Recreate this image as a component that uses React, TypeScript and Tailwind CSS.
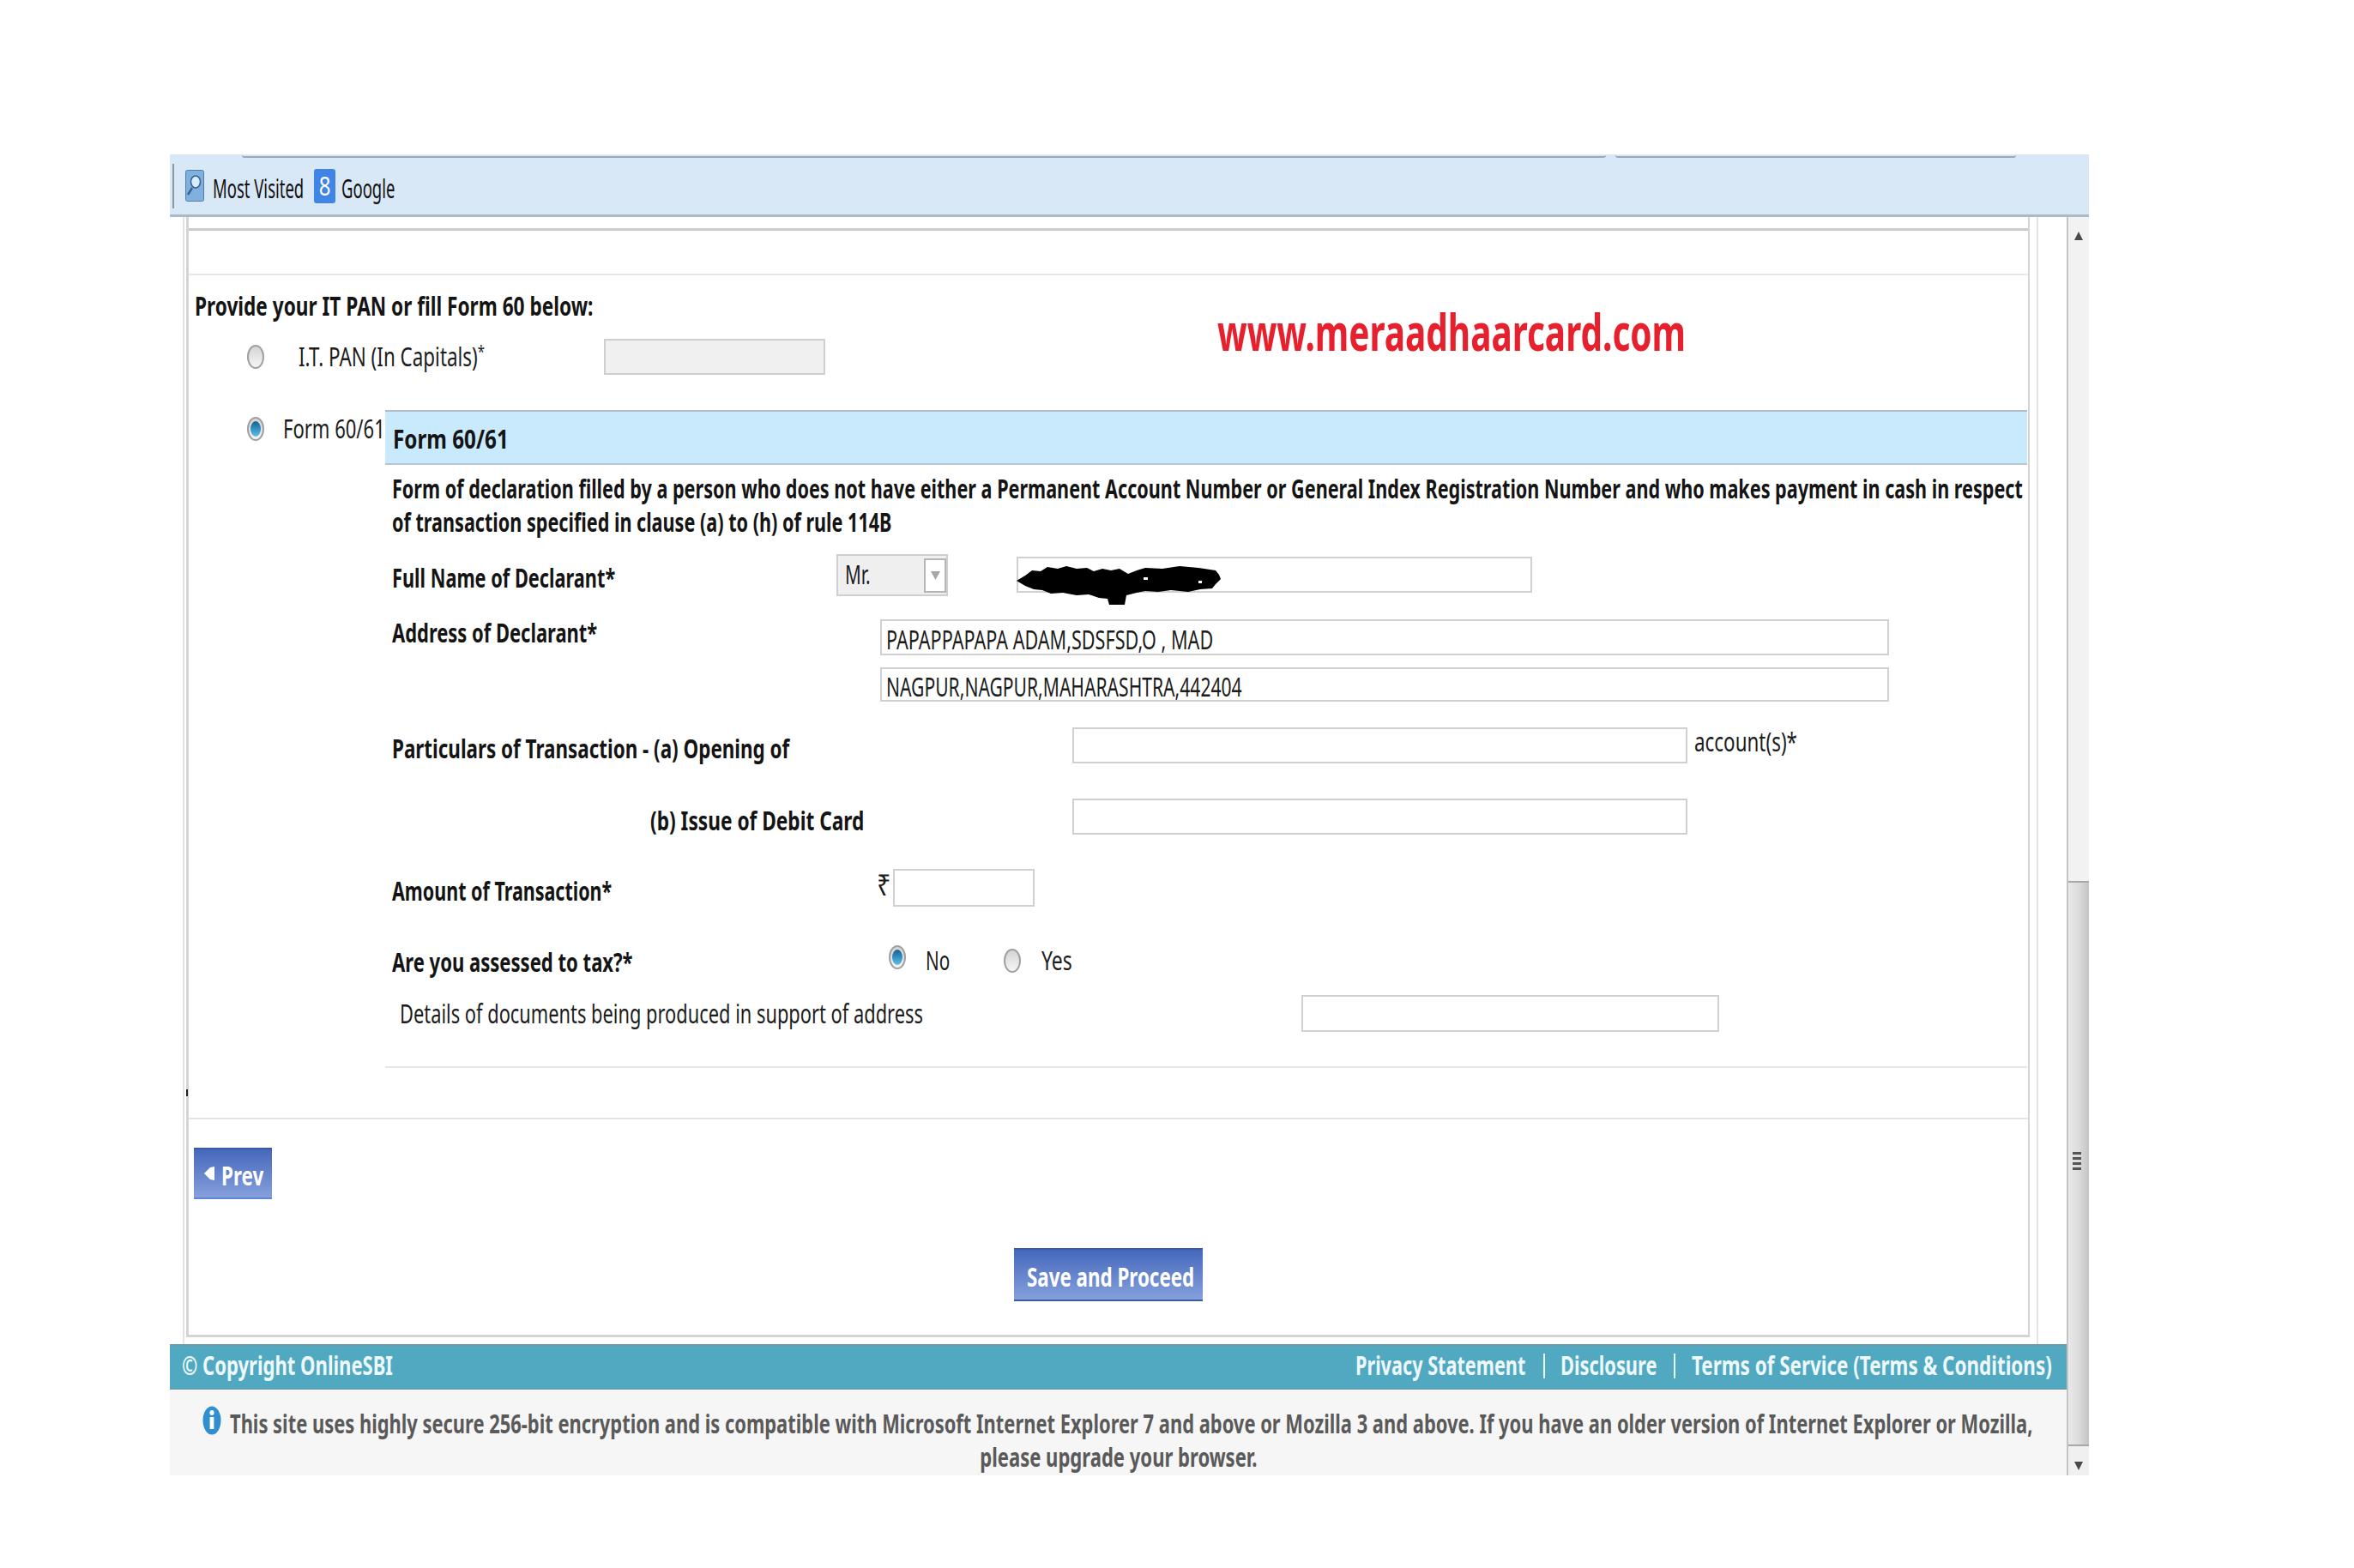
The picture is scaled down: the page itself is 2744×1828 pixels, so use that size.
import React from "react";
import clsx from "clsx";

const bold = "font-bold text-[30px] leading-[32px] text-[#141414]";
const reg = "text-[30px] leading-[32px] text-[#1c1c1c]";
const foot = "font-bold text-[30px] leading-[32px] text-[#eef8fb]";
const note = "font-bold text-[30px] text-[#5a5a5a]";
const btn = "font-bold text-[30px] leading-[32px] text-white";

function T({ c, o = "origin-left", children }: { c: string; o?: string; children: React.ReactNode }) {
  return <span className={clsx("inline-block whitespace-nowrap", o, c)}>{children}</span>;
}

function Radio({ on }: { on?: boolean }) {
  return (
    <div className="flex h-[28px] w-[20px] shrink-0 items-center justify-center rounded-[50%] border-2 border-[#a0a0a0] bg-gradient-to-b from-[#d4d4d4] to-[#f6f6f6]">
      {on && <div className="h-[18px] w-[12px] rounded-[50%] bg-gradient-to-b from-[#0f5f93] to-[#5ec1ee]" />}
    </div>
  );
}

function Box({ c, children }: { c: string; children?: React.ReactNode }) {
  return (
    <div className={clsx("flex shrink-0 items-center border-2 border-[#d0d0d0] bg-white pl-[5px]", c)}>{children}</div>
  );
}

function Arrow({ up }: { up?: boolean }) {
  return (
    <svg width="10" height="10" viewBox="0 0 10 10" className="block">
      <polygon points={up ? "5,0 10,10 0,10" : "0,0 10,0 5,10"} fill="#4a4a4a" />
    </svg>
  );
}

export default function App() {
  return (
    <div className="relative h-[1828px] w-[2744px] overflow-hidden bg-white pl-[198px] pt-[180px] font-['Noto_Sans',sans-serif]">
      <div className="flex h-[1540px] w-[2237px] flex-col">
        {/* Bookmarks toolbar */}
        <div className="h-[73px] shrink-0 border-b-[3px] border-[#a9bacb] bg-[#d9e8f7]">
          <div className="flex h-[4px] pl-[84px]">
            <div className="h-full w-[1590px] rounded-b-[3px] border-b-2 border-[#9aa7b5]" />
            <div className="ml-[11px] h-full w-[467px] rounded-b-[3px] border-b-2 border-[#9aa7b5]" />
          </div>
          <div className="flex h-[65px] items-center pl-[3px]">
            <div className="h-[52px] w-[2px] bg-[#8c98a6]" />
            <svg width="22" height="37" viewBox="0 0 22 37" className="ml-[13px] block shrink-0">
              <rect x="0.5" y="0.5" width="21" height="36" rx="2" fill="#7fb0de" stroke="#4b7fae" />
              <ellipse cx="12" cy="14" rx="5.5" ry="7" fill="#d8ecfb" stroke="#34658f" strokeWidth="1.6" />
              <line x1="8" y1="21" x2="3" y2="29" stroke="#34658f" strokeWidth="2.4" />
            </svg>
            <div className="ml-[10px] w-[118px] shrink-0 pt-[8px]">
              <T c="text-[30px] leading-[32px] text-[#111] scale-x-[0.616]">Most Visited</T>
            </div>
            <div className="flex h-[40px] w-[25px] shrink-0 items-center justify-center rounded-[3px] bg-[#3f84e6] text-[30px] leading-none text-white">
              <T o="origin-center" c="scale-x-[0.8]">8</T>
            </div>
            <div className="ml-[7px] pt-[8px]">
              <T c="text-[30px] leading-[32px] text-[#111] scale-x-[0.616]">Google</T>
            </div>
          </div>
        </div>

        <div className="flex min-h-0 flex-1">
          {/* Page */}
          <div className="flex w-[2211px] flex-col">
            <div className="h-[1314px] shrink-0 pl-[15px]">
              <div className="h-full w-[2163px] border-l-2 border-r-2 border-[#e3e3e3] pl-[2px]">
                <div className="flex h-[1306px] w-[2149px] flex-col border-b-[3px] border-l-[3px] border-r-2 border-[#d4d4d4] bg-white">
                  <div className="h-[16px] shrink-0 border-b-[3px] border-[#c9cccf]" />
                  <div className="h-[52px] shrink-0 border-b-2 border-[#e6e6e6]" />

                  <div className="flex h-[73px] shrink-0 items-center pb-[2px] pl-[7px]">
                    <T c={clsx(bold, "scale-x-[0.754]")}>Provide your IT PAN or fill Form 60 below:</T>
                  </div>

                  <div className="flex h-[44px] shrink-0 items-center pl-[68px]">
                    <Radio />
                    <div className="ml-[40px] w-[356px] shrink-0">
                      <T c={clsx(reg, "scale-x-[0.747]")}>
                        I.T. PAN (In Capitals)<sup className="text-[20px]">*</sup>
                      </T>
                    </div>
                    <div className="h-[42px] w-[258px] border-2 border-[#cfcfcf] bg-[#f0f0f0]" />
                  </div>

                  <div className="h-[40px] shrink-0" />

                  <div className="flex shrink-0">
                    <div className="flex h-[44px] w-[229px] shrink-0 items-center pl-[68px]">
                      <Radio on />
                      <div className="ml-[22px]">
                        <T c={clsx(reg, "scale-x-[0.734]")}>Form 60/61</T>
                      </div>
                    </div>
                    <div className="w-[1914px]">
                      <div className="flex h-[64px] items-center border-b-2 border-t-2 border-b-[#b9c6cf] border-t-[#aebdc8] bg-[#c9e9fd] pl-[9px] pt-[3px]">
                        <T c={clsx(bold, "scale-x-[0.808]")}>Form 60/61</T>
                      </div>
                      <div className="pl-[8px] pt-[12px]">
                        <div className="h-[39px] leading-[40px]">
                          <T c={clsx(bold, "scale-x-[0.72]")}>
                            Form of declaration filled by a person who does not have either a Permanent Account Number or
                            General Index Registration Number and who makes payment in cash in respect
                          </T>
                        </div>
                        <div className="h-[40px] leading-[40px]">
                          <T c={clsx(bold, "scale-x-[0.72]")}>of transaction specified in clause (a) to (h) of rule 114B</T>
                        </div>
                      </div>

                      <div className="mt-[13px] flex h-[49px] pl-[8px]">
                        <div className="w-[518px] shrink-0 pt-[12px]">
                          <T c={clsx(bold, "scale-x-[0.725]")}>Full Name of Declarant*</T>
                        </div>
                        <div className="flex h-[49px] w-[130px] shrink-0 items-center border-2 border-[#cfcfcf] bg-[#efefef] pl-[8px]">
                          <div className="w-[92px] shrink-0">
                            <T c={clsx(reg, "scale-x-[0.69]")}>Mr.</T>
                          </div>
                          <div className="flex h-[40px] w-[26px] shrink-0 items-center justify-center border-2 border-[#b5b5b5] bg-white">
                            <svg width="11" height="10" viewBox="0 0 11 10" className="block">
                              <polygon points="0,0 11,0 5.5,10" fill="#a5a5a5" />
                            </svg>
                          </div>
                        </div>
                        <div className="relative ml-[80px] mt-[3px] h-[42px] w-[601px] shrink-0 border-2 border-[#d0d0d0] bg-white">
                          <svg width="240" height="50" viewBox="0 0 240 50" className="absolute left-[-2px] top-[6px] block">
                            <path
                              d="M0 20 L10 14 L18 8 L28 9 L36 4 L48 6 L58 3 L70 6 L82 5 L90 9 L100 6 L110 8 L120 6 L130 12 L140 8 L150 5 L170 6 L190 3 L212 5 L232 8 L236 13 L238 18 L232 24 L228 29 L214 30 L200 33 L180 31 L165 33 L150 32 L140 34 L128 37 L126 48 L108 48 L106 41 L96 40 L84 36 L70 37 L54 34 L40 35 L30 31 L20 30 L10 26 Z"
                              fill="#000"
                            />
                            <rect x="212" y="20" width="4" height="3" fill="#fff" />
                            <rect x="148" y="16" width="5" height="3" fill="#fff" />
                          </svg>
                        </div>
                      </div>

                      <div className="mt-[27px] flex pl-[8px]">
                        <div className="w-[569px] shrink-0">
                          <T c={clsx(bold, "scale-x-[0.731]")}>Address of Declarant*</T>
                        </div>
                        <div className="flex flex-col gap-[14px]">
                          <Box c="h-[42px] w-[1176px] pt-[6px]">
                            <T c={clsx(reg, "scale-x-[0.72]")}>PAPAPPAPAPA ADAM,SDSFSD,O , MAD</T>
                          </Box>
                          <Box c="h-[40px] w-[1176px] pt-[6px]">
                            <T c={clsx(reg, "scale-x-[0.703]")}>NAGPUR,NAGPUR,MAHARASHTRA,442404</T>
                          </Box>
                        </div>
                      </div>

                      <div className="mt-[30px] flex h-[42px] pl-[8px]">
                        <div className="w-[793px] shrink-0 pt-[9px]">
                          <T c={clsx(bold, "scale-x-[0.747]")}>Particulars of Transaction - (a) Opening of</T>
                        </div>
                        <Box c="h-[42px] w-[717px]" />
                        <div className="ml-[8px] mt-[1px]">
                          <T c={clsx(reg, "scale-x-[0.747]")}>account(s)*</T>
                        </div>
                      </div>

                      <div className="mt-[41px] flex h-[42px] pl-[309px]">
                        <div className="w-[492px] shrink-0 pt-[10px]">
                          <T c={clsx(bold, "scale-x-[0.756]")}>(b) Issue of Debit Card</T>
                        </div>
                        <Box c="h-[42px] w-[717px]" />
                      </div>

                      <div className="mt-[40px] flex h-[44px] pl-[8px]">
                        <div className="w-[565px] shrink-0 pt-[10px]">
                          <T c={clsx(bold, "scale-x-[0.716]")}>Amount of Transaction*</T>
                        </div>
                        <div className="w-[19px] shrink-0 pt-[2px]">
                          <T c="text-[34px] leading-[32px] text-[#1c1c1c] scale-x-[0.85]">₹</T>
                        </div>
                        <Box c="h-[44px] w-[165px]" />
                      </div>

                      <div className="mt-[43px] flex h-[40px] pl-[8px]">
                        <div className="w-[579px] shrink-0 pt-[6px]">
                          <T c={clsx(bold, "scale-x-[0.735]")}>Are you assessed to tax?*</T>
                        </div>
                        <div className="mt-[2px]">
                          <Radio on />
                        </div>
                        <div className="ml-[23px] w-[91px] shrink-0 pt-[4px]">
                          <T c={clsx(reg, "scale-x-[0.69]")}>No</T>
                        </div>
                        <div className="mt-[6px]">
                          <Radio />
                        </div>
                        <div className="ml-[24px] pt-[4px]">
                          <T c={clsx(reg, "scale-x-[0.765]")}>Yes</T>
                        </div>
                      </div>

                      <div className="mt-[20px] flex h-[43px] pl-[17px]">
                        <div className="w-[1051px] shrink-0 pt-[6px]">
                          <T c={clsx(reg, "scale-x-[0.728]")}>Details of documents being produced in support of address</T>
                        </div>
                        <Box c="h-[43px] w-[487px]" />
                      </div>

                      <div className="h-[42px] border-b-2 border-[#e6e6e6]" />
                    </div>
                  </div>

                  <div className="flex h-[60px] shrink-0 items-center border-b-2 border-[#e3e3e3]">
                    <div className="ml-[-3px] h-[8px] w-[2px] bg-[#222]" />
                  </div>

                  <div className="ml-[6px] mt-[33px] flex h-[60px] w-[91px] shrink-0 items-center border-b-2 border-t-2 border-b-[#5f86cf] border-t-[#3b5aa8] bg-gradient-to-b from-[#4668bb] to-[#86a0dc] pl-[12px] pt-[6px]">
                    <svg width="12" height="18" viewBox="0 0 12 18" className="mb-[6px] block shrink-0">
                      <path d="M12 1 L12 17 L7 16 L0 9 L7 2 Z" fill="#fff" />
                    </svg>
                    <div className="ml-[8px]">
                      <T c={clsx(btn, "scale-x-[0.747]")}>Prev</T>
                    </div>
                  </div>

                  <div className="ml-[962px] mt-[57px] flex h-[62px] w-[220px] shrink-0 items-center border-b-2 border-t-2 border-b-[#3b5aa8] border-t-[#3b5aa8] bg-gradient-to-b from-[#4668bb] to-[#86a0dc] pl-[15px] pt-[6px]">
                    <T c={clsx(btn, "scale-x-[0.745]")}>Save and Proceed</T>
                  </div>
                </div>
              </div>
            </div>

            {/* Teal footer */}
            <div className="flex h-[53px] shrink-0 items-center border-b-2 border-t-2 border-b-[#5f9fb0] border-t-[#6c9aa6] bg-[#50a9c1] pb-[3px] pl-[14px]">
              <div className="w-[1368px] shrink-0">
                <T c={clsx(foot, "scale-x-[0.735]")}>© Copyright OnlineSBI</T>
              </div>
              <div className="w-[219px] shrink-0">
                <T c={clsx(foot, "scale-x-[0.722]")}>Privacy Statement</T>
              </div>
              <div className="h-[29px] w-[2px] shrink-0 bg-[#eef8fb]" />
              <div className="ml-[18px] w-[132px] shrink-0">
                <T c={clsx(foot, "scale-x-[0.728]")}>Disclosure</T>
              </div>
              <div className="h-[29px] w-[2px] shrink-0 bg-[#eef8fb]" />
              <div className="ml-[19px] shrink-0">
                <T c={clsx(foot, "scale-x-[0.747]")}>Terms of Service (Terms &amp; Conditions)</T>
              </div>
            </div>

            {/* Grey notice */}
            <div className="min-h-0 flex-1 bg-[#f6f6f6] pt-[20px]">
              <div className="flex items-center pl-[38px]">
                <svg width="22" height="34" viewBox="0 0 22 34" className="mt-[-8px] block shrink-0">
                  <ellipse cx="11" cy="17" rx="10.5" ry="16.5" fill="#2f8fd0" />
                  <ellipse cx="11" cy="8" rx="2.6" ry="3" fill="#fff" />
                  <rect x="8.6" y="13" width="4.8" height="14" fill="#fff" />
                </svg>
                <div className="ml-[10px] h-[40px]">
                  <T c={clsx(note, "leading-[40px] scale-x-[0.73]")}>
                    This site uses highly secure 256-bit encryption and is compatible with Microsoft Internet Explorer 7 and above or Mozilla 3 and above. If you have an older version of Internet Explorer or Mozilla,
                  </T>
                </div>
              </div>
              <div className="flex justify-center">
                <T o="origin-center" c={clsx(note, "leading-[38px] scale-x-[0.735]")}>please upgrade your browser.</T>
              </div>
            </div>
          </div>

          {/* Scrollbar */}
          <div className="flex w-[26px] shrink-0 flex-col items-center border-l-2 border-[#c4c4c4] bg-[#f0f0f0]">
            <div className="flex h-[774px] w-full shrink-0 items-start justify-center bg-[#f2f2f2] pt-[17px]">
              <Arrow up />
            </div>
            <div className="flex h-[659px] w-full shrink-0 items-center justify-center border-y-2 border-[#a8a8a8] bg-gradient-to-r from-[#e9e9e9] via-[#dcdcdc] to-[#c4c4c4] pr-[4px]">
              <div className="mt-[-6px] flex flex-col gap-[3px]">
                <div className="h-[3px] w-[10px] bg-[#555]" />
                <div className="h-[3px] w-[10px] bg-[#555]" />
                <div className="h-[3px] w-[10px] bg-[#555]" />
                <div className="h-[3px] w-[10px] bg-[#555]" />
              </div>
            </div>
            <div className="flex w-full flex-1 items-start justify-center pt-[18px]">
              <Arrow />
            </div>
          </div>
        </div>
      </div>

      {/* Watermark stamped over the form */}
      <div className="absolute left-[1419px] top-[350px]">
        <T c="font-bold text-[60px] leading-[72px] text-[#e6202c] scale-x-[0.675]">www.meraadhaarcard.com</T>
      </div>
    </div>
  );
}
